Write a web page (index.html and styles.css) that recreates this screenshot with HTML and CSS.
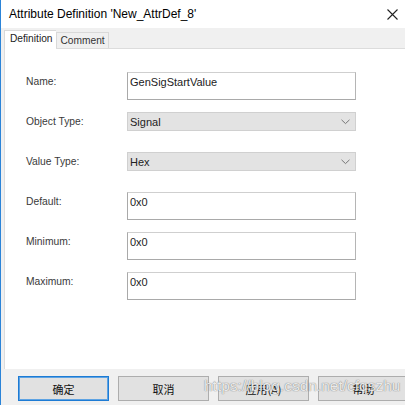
FILE: index.html
```html
<!DOCTYPE html>
<html>
<head>
<meta charset="utf-8">
<link rel="stylesheet" href="styles.css">
</head>
<body>
<div class="window">
  <div class="titlebar">
    <span class="title">Attribute Definition 'New_AttrDef_8'</span>
    <svg class="close" width="11" height="11" viewBox="0 0 11 11"><path d="M0.5 0.5L10.5 10.5M10.5 0.5L0.5 10.5" stroke="#222" stroke-width="1.1" fill="none"/></svg>
  </div>
  <div class="frame">
    <div class="tabs">
      <div class="tab active">Definition</div>
      <div class="tab">Comment</div>
    </div>
    <div class="panel">
      <div class="form">
        <div class="row">
          <label class="lbl">Name:</label>
          <div class="field text">GenSigStartValue</div>
        </div>
        <div class="row">
          <label class="lbl">Object Type:</label>
          <div class="field select"><span>Signal</span><svg width="9" height="6" viewBox="0 0 9 6"><path d="M0.5 0.8L4.5 4.6L8.5 0.8" stroke="#777" stroke-width="1" fill="none"/></svg></div>
        </div>
        <div class="row">
          <label class="lbl">Value Type:</label>
          <div class="field select"><span>Hex</span><svg width="9" height="6" viewBox="0 0 9 6"><path d="M0.5 0.8L4.5 4.6L8.5 0.8" stroke="#777" stroke-width="1" fill="none"/></svg></div>
        </div>
        <div class="row">
          <label class="lbl">Default:</label>
          <div class="field text">0x0</div>
        </div>
        <div class="row">
          <label class="lbl">Minimum:</label>
          <div class="field text">0x0</div>
        </div>
        <div class="row">
          <label class="lbl">Maximum:</label>
          <div class="field text">0x0</div>
        </div>
      </div>
    </div>
    <div class="buttons">
      <button class="btn default">确定</button>
      <button class="btn">取消</button>
      <button class="btn">应用(A)</button>
      <button class="btn">帮助</button>
      <span class="watermark">https://blog.csdn.net/cfqszhu</span>
    </div>
  </div>
</div>
</body>
</html>
```

FILE: styles.css
```css
html, body {
  margin: 0;
  padding: 0;
  background: #f0f0f0;
}
body {
  font-family: "Liberation Sans", Arial, "Noto Sans CJK SC", sans-serif;
  color: #1a1a1a;
}
.window {
  width: 405px;
  height: 405px;
  box-sizing: border-box;
  border-left: 1px solid #2b84d8;
  display: flex;
  flex-direction: column;
  overflow: hidden;
}
.titlebar {
  height: 28px;
  background: #ffffff;
  display: flex;
  align-items: center;
  justify-content: space-between;
  padding: 0 7px 0 8px;
  flex: none;
}
.title {
  font-size: 12px;
  color: #000;
  margin-top: -1px;
}
.frame {
  flex: 1;
  display: flex;
  flex-direction: column;
  background: #f0f0f0;
  padding: 0 0 0 3px;
}
.tabs {
  display: flex;
  align-items: flex-end;
  height: 20px;
  border-bottom: 1px solid #dcdcdc;
  flex: none;
}
.tab {
  font-size: 10.2px;
  color: #333;
  height: 15px;
  line-height: 15px;
  padding: 0 3px 0 3px;
  border: 1px solid #d9d9d9;
  border-bottom: none;
  background: #f0f0f0;
}
.tab.active {
  background: #ffffff;
  color: #222;
  height: 17px;
  line-height: 15px;
  padding: 0 4px 1px 5px;
  margin-bottom: -1px;
  border-right: none;
}
.panel {
  background: #ffffff;
  height: 320px;
  flex: none;
  border-left: 1px solid #dcdcdc;
}
.form {
  padding: 23px 0 0 21px;
  display: flex;
  flex-direction: column;
  gap: 12px;
}
.row {
  display: flex;
  align-items: flex-start;
}
.lbl {
  width: 101px;
  flex: none;
  font-size: 10.3px;
  color: #3a3a3a;
  padding-top: 4px;
}
.field {
  width: 229px;
  box-sizing: border-box;
  font-size: 11px;
  color: #222;
}
.field.text {
  height: 28px;
  border: 1px solid #a9a9a9;
  border-top-color: #cfcfcf;
  border-right-color: #b5b5b5;
  background: #fff;
  padding: 3px 2px;
}
.field.select {
  height: 19px;
  margin: 0 0 9px;
  background: #e3e3e3;
  border: 1px solid #d0d0d0;
  display: flex;
  align-items: center;
  justify-content: space-between;
  padding: 0 5px 0 2px;
}
.field.select span {
  margin-top: 1px;
}
.buttons {
  position: relative;
  flex: 1;
  display: flex;
  align-items: flex-start;
  gap: 9px;
  padding: 7px 0 0 14px;
}
.btn {
  width: 91px;
  height: 25px;
  flex: none;
  box-sizing: border-box;
  background: #e1e1e1;
  border: 1px solid #adadad;
  font-family: "Noto Sans CJK SC", sans-serif;
  font-size: 11px;
  color: #111;
  padding: 0;
}
.btn.default {
  border: 1px solid #1d7bd4;
  box-shadow: inset 0 0 0 1px #5ea3e3;
}
.watermark {
  position: absolute;
  left: 200px;
  top: 8px;
  font-family: "Liberation Sans", Arial, sans-serif;
  font-size: 15.5px;
  color: rgba(255, 255, 255, 0.85);
  text-shadow: 0 0 1px rgba(90, 90, 90, 0.6), 0 0 1px rgba(90, 90, 90, 0.6);
  pointer-events: none;
}
```
